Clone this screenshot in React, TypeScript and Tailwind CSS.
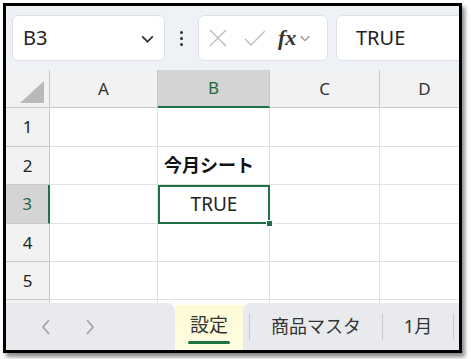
import React from "react";

const font = { fontFamily: '"Noto Sans", "Noto Sans CJK JP", sans-serif' };

const rows = [1, 2, 3, 4, 5];
const cols = ["A", "B", "C", "D"];

const Chevron = ({ className = "" }: { className?: string }) => (
  <svg viewBox="0 0 16 16" className={className} fill="none" stroke="currentColor" strokeWidth="1.6">
    <path d="M3 6l5 5 5-5" />
  </svg>
);

const Toolbar = () => (
  <div className="flex h-[64px] items-center bg-[#eef1f5] pl-[6px]">
    <div className="flex h-[46px] w-[153px] shrink-0 items-center justify-between rounded-[6px] border border-[#dde1e6] bg-white pl-[10px] pr-[8px]">
      <span className="text-[20px] text-[#222]">B3</span>
      <Chevron className="h-[17px] w-[17px] text-[#333]" />
    </div>
    <div className="flex w-[33px] shrink-0 flex-col items-center gap-[3px]">
      <span className="h-[3px] w-[3px] rounded-full bg-[#333]" />
      <span className="h-[3px] w-[3px] rounded-full bg-[#333]" />
      <span className="h-[3px] w-[3px] rounded-full bg-[#333]" />
    </div>
    <div className="flex h-[46px] w-[130px] shrink-0 items-center rounded-[6px] border border-[#dde1e6] bg-white pl-[9px]">
      <svg viewBox="0 0 20 20" className="h-[20px] w-[20px] text-[#bdbdbd]" fill="none" stroke="currentColor" strokeWidth="1.4">
        <path d="M2 2l16 16M18 2L2 18" />
      </svg>
      <svg viewBox="0 0 22 20" className="ml-[16px] h-[20px] w-[22px] text-[#bdbdbd]" fill="none" stroke="currentColor" strokeWidth="1.4">
        <path d="M1 11l6 6L21 3" />
      </svg>
      <span
        className="ml-[12px] text-[22px] font-bold italic leading-none text-[#333]"
        style={{ fontFamily: '"Liberation Serif", serif' }}
      >
        fx
      </span>
      <Chevron className="ml-[2px] h-[14px] w-[14px] text-[#999]" />
    </div>
    <div className="ml-[8px] flex h-[46px] w-[200px] shrink-0 items-center rounded-[6px] border border-[#dde1e6] bg-white pl-[19px]">
      <span className="text-[20px] text-[#222]">TRUE</span>
    </div>
  </div>
);

const Grid = () => (
  <div className="grid grid-cols-[44px_108px_112px_110px_90px] grid-rows-[38px_39px_38px_39px_38px_38px_3px] overflow-hidden bg-white">
    <div className="relative border-r border-b border-[#c8c8c8] bg-[#f2f2f2]">
      <svg viewBox="0 0 24 22" className="absolute right-[5px] bottom-[4px] h-[22px] w-[24px]">
        <path d="M24 0V22H0Z" fill="#b9b9b9" />
      </svg>
    </div>
    {cols.map((c) => (
      <div
        key={c}
        className={
          c === "B"
            ? "flex items-center justify-center border-r border-b-[2px] border-r-[#c8c8c8] border-b-[#1e7145] bg-[#d4d4d4] text-[17px] text-[#1e6b3c]"
            : "flex items-center justify-center border-r border-b border-[#c8c8c8] bg-[#f2f2f2] text-[17px] text-[#333]"
        }
      >
        {c}
      </div>
    ))}
    {rows.map((r) => (
      <React.Fragment key={r}>
        <div
          className={
            r === 3
              ? "flex items-center justify-center border-r-[2px] border-b border-r-[#1e7145] border-b-[#c8c8c8] bg-[#d4d4d4] text-[17px] text-[#1e6b3c]"
              : "flex items-center justify-center border-r border-b border-[#c8c8c8] bg-[#f2f2f2] text-[17px] text-[#222]"
          }
        >
          {r}
        </div>
        {cols.map((c) => {
          if (r === 3 && c === "B") {
            return (
              <div key={c} className="relative flex items-center justify-center border-[2px] border-[#1e7145] text-[19px] text-[#222]">
                TRUE
                <span className="absolute -right-[5px] -bottom-[5px] h-[7px] w-[7px] border border-white bg-[#1e7145]" />
              </div>
            );
          }
          return (
            <div key={c} className="flex items-center border-r border-b border-[#e1e1e1] pl-[6px]">
              {r === 2 && c === "B" && (
                <span className="text-[18px] font-bold text-[#111]">今月シート</span>
              )}
            </div>
          );
        })}
      </React.Fragment>
    ))}
    <div className="border-r border-[#c8c8c8] bg-[#f2f2f2]" />
    {cols.map((c) => (
      <div key={c} className="border-r border-[#e1e1e1]" />
    ))}
  </div>
);

const Tabs = () => (
  <div className="flex h-[47px] bg-white">
    <div className="flex w-[169px] items-center gap-[34px] rounded-tr-[8px] bg-[#e8eaee] pl-[35px]">
      <svg viewBox="0 0 10 16" className="h-[16px] w-[10px] text-[#a0a0a0]" fill="none" stroke="currentColor" strokeWidth="1.6">
        <path d="M8 1L2 8l6 7" />
      </svg>
      <svg viewBox="0 0 10 16" className="h-[16px] w-[10px] text-[#a0a0a0]" fill="none" stroke="currentColor" strokeWidth="1.6">
        <path d="M2 1l6 7-6 7" />
      </svg>
    </div>
    <div className="mt-[2px] flex w-[68px] flex-col items-center justify-center bg-gradient-to-b from-[#fffbd6] to-[#fdfde0]">
      <span className="text-[19px] text-[#333]">設定</span>
      <span className="mt-[1px] h-[3px] w-[42px] rounded-full bg-[#1e7145]" />
    </div>
    <div className="flex flex-1 items-center rounded-tl-[8px] bg-[#e8eaee]">
      <span className="ml-[6px] h-[26px] w-px bg-[#c8c8c8]" />
      <span className="w-[132px] text-center text-[18px] text-[#333]">商品マスタ</span>
      <span className="h-[26px] w-px bg-[#c8c8c8]" />
      <span className="w-[70px] text-center text-[18px] text-[#333]">1月</span>
      <span className="h-[26px] w-px bg-[#c8c8c8]" />
    </div>
  </div>
);

export default function App() {
  return (
    <div className="h-[359px] w-[471px] bg-white pt-[3px] pl-[3px]" style={font}>
      <div className="flex h-[350px] w-[459px] flex-col overflow-hidden border-[3px] border-black shadow-[3px_4px_4px_rgba(0,0,0,0.45)]">
        <Toolbar />
        <Grid />
        <Tabs />
      </div>
    </div>
  );
}
